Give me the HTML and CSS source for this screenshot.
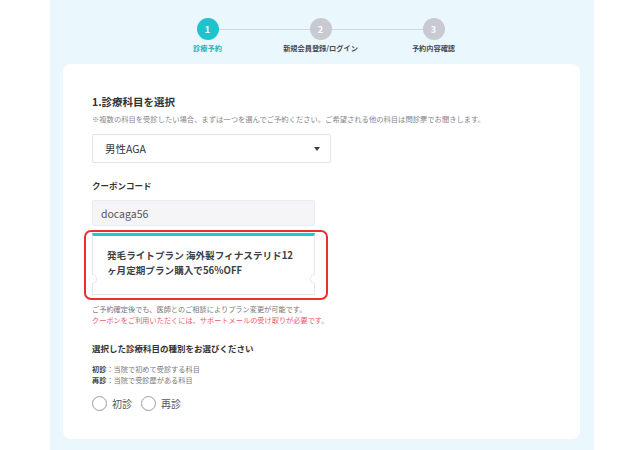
FILE: index.html
```html
<!DOCTYPE html>
<html lang="ja">
  <head>
    <meta charset="UTF-8" />
    <meta name="viewport" content="width=device-width, initial-scale=1.0" />
    <title>診療予約</title>
    <link rel="stylesheet" href="styles.css">
  </head>
  <body>
    <div class="page">
      <ol class="steps">
        <li class="step is-active">
          <span class="step-num">1</span>
          <span class="step-label">診療予約</span>
        </li>
        <li class="step">
          <span class="step-num">2</span>
          <span class="step-label">新規会員登録/ログイン</span>
        </li>
        <li class="step">
          <span class="step-num">3</span>
          <span class="step-label">予約内容確認</span>
        </li>
      </ol>

      <section class="card">
        <h2 class="title">1.診療科目を選択</h2>
        <p class="note">※複数の科目を受診したい場合、まずは一つを選んでご予約ください。ご希望される他の科目は問診票でお聞きします。</p>

        <div class="select">
          <span>男性AGA</span>
          <span class="select-arrow"></span>
        </div>

        <h3 class="label">クーポンコード</h3>
        <div class="coupon-input">docaga56</div>

        <div class="highlight">
          <div class="ticket">
            <p>発毛ライトプラン 海外製フィナステリド12<br>ヶ月定期プラン購入で56%OFF</p>
          </div>
        </div>

        <p class="small">ご予約確定後でも、医師とのご相談によりプラン変更が可能です。</p>
        <p class="small small-red">クーポンをご利用いただくには、サポートメールの受け取りが必要です。</p>

        <h3 class="label label-kind">選択した診療科目の種別をお選びください</h3>
        <p class="small"><b>初診</b>：当院で初めて受診する科目</p>
        <p class="small"><b>再診</b>：当院で受診歴がある科目</p>

        <div class="radios">
          <label class="radio"><span class="radio-dot"></span>初診</label>
          <label class="radio"><span class="radio-dot"></span>再診</label>
        </div>
      </section>
    </div>
  </body>
</html>
```

FILE: styles.css
```css
html {
  box-sizing: border-box;
  font-family: "Noto Sans CJK JP", "Noto Sans", sans-serif;
  font-size: 16px;
  color: #333;
}

*,
*:before,
*:after {
  box-sizing: inherit;
}

body {
  margin: 0;
  background-color: #fff;
}

p,
h2,
h3,
ol {
  margin: 0;
  padding: 0;
}

.page {
  margin-left: 50px;
  width: 544px;
  min-height: 450px;
  background-color: #eaf7fd;
  padding: 18px 14px 13px 13px;
}

.steps {
  list-style: none;
  display: grid;
  grid-template-columns: repeat(3, 113px);
  justify-content: center;
  margin-left: -2px;
}

.step {
  position: relative;
  display: flex;
  flex-direction: column;
  align-items: center;
}

.step + .step:before {
  content: "";
  position: absolute;
  top: 11px;
  right: 50%;
  width: 113px;
  height: 1px;
  background-color: #d3d6dd;
}

.step-num {
  position: relative;
  z-index: 1;
  width: 22px;
  height: 22px;
  border-radius: 50%;
  background-color: #c9c9d1;
  color: #fff;
  font-size: 9px;
  font-weight: bold;
  display: flex;
  align-items: center;
  justify-content: center;
}

.step-label {
  margin-top: 2px;
  font-size: 7.2px;
  font-weight: bold;
  line-height: 12px;
  color: #4a4a52;
  white-space: nowrap;
}

.is-active .step-num {
  background-color: #1ec3cb;
}

.is-active .step-label {
  color: #1ab4bd;
}

.card {
  margin-top: 10px;
  background-color: #fff;
  border-radius: 8px;
  padding: 30px 29px 28px;
  min-height: 373px;
}

.title {
  font-size: 10.5px;
  line-height: 16px;
  font-weight: bold;
  color: #333;
}

.note {
  margin-top: 3px;
  font-size: 7.3px;
  line-height: 12px;
  color: #888;
  white-space: nowrap;
}

.select {
  margin-top: 9px;
  width: 239px;
  height: 29px;
  border: 1px solid #e2e3e8;
  border-radius: 2px;
  padding: 0 10px 0 12px;
  display: flex;
  align-items: center;
  justify-content: space-between;
  font-size: 10.5px;
  color: #333;
}

.select-arrow {
  width: 0;
  height: 0;
  border-left: 3.5px solid transparent;
  border-right: 3.5px solid transparent;
  border-top: 4px solid #3a3f4a;
}

.label {
  margin-top: 15px;
  font-size: 8.5px;
  line-height: 14px;
  font-weight: bold;
  color: #333;
}

.coupon-input {
  margin-top: 8px;
  width: 223px;
  height: 26px;
  background-color: #f5f5f8;
  border: 1px solid #ececf0;
  border-radius: 2px;
  padding: 0 8px;
  display: flex;
  align-items: center;
  font-size: 10.5px;
  color: #555;
}

.highlight {
  margin: 4px 0 0 -8px;
  width: 244px;
  border: 2px solid #ea2f2f;
  border-radius: 7px;
  padding: 1px 11px 3px 6px;
}

.ticket {
  position: relative;
  height: 62px;
  border: 1px solid #e6e7ee;
  border-top: 3px solid #22c6ce;
  padding: 12px 14px 0;
}

.ticket:before,
.ticket:after {
  content: "";
  position: absolute;
  top: 38px;
  width: 5px;
  height: 10px;
  border: 1px solid #e6e7ee;
  background-color: #fff;
}

.ticket:before {
  left: -1px;
  border-left: none;
  border-radius: 0 5px 5px 0;
}

.ticket:after {
  right: -1px;
  border-right: none;
  border-radius: 5px 0 0 5px;
}

.ticket p {
  font-size: 9.6px;
  line-height: 14.5px;
  font-weight: bold;
  color: #3a3f4a;
  white-space: nowrap;
}

.small {
  font-size: 7.2px;
  line-height: 11px;
  color: #777;
}

.highlight + .small {
  margin-top: 4px;
}

.small-red {
  color: #f2566b;
}

.small b {
  color: #444;
}

.label-kind {
  margin-top: 15px;
  margin-bottom: 9px;
}

.radios {
  margin-top: 10px;
  display: flex;
  gap: 9px;
}

.radio {
  display: flex;
  align-items: center;
  gap: 5px;
  font-size: 10px;
  color: #555;
}

.radio-dot {
  width: 15px;
  height: 15px;
  border: 1px solid #9a9ca3;
  border-radius: 50%;
  background-color: #fff;
}
```
